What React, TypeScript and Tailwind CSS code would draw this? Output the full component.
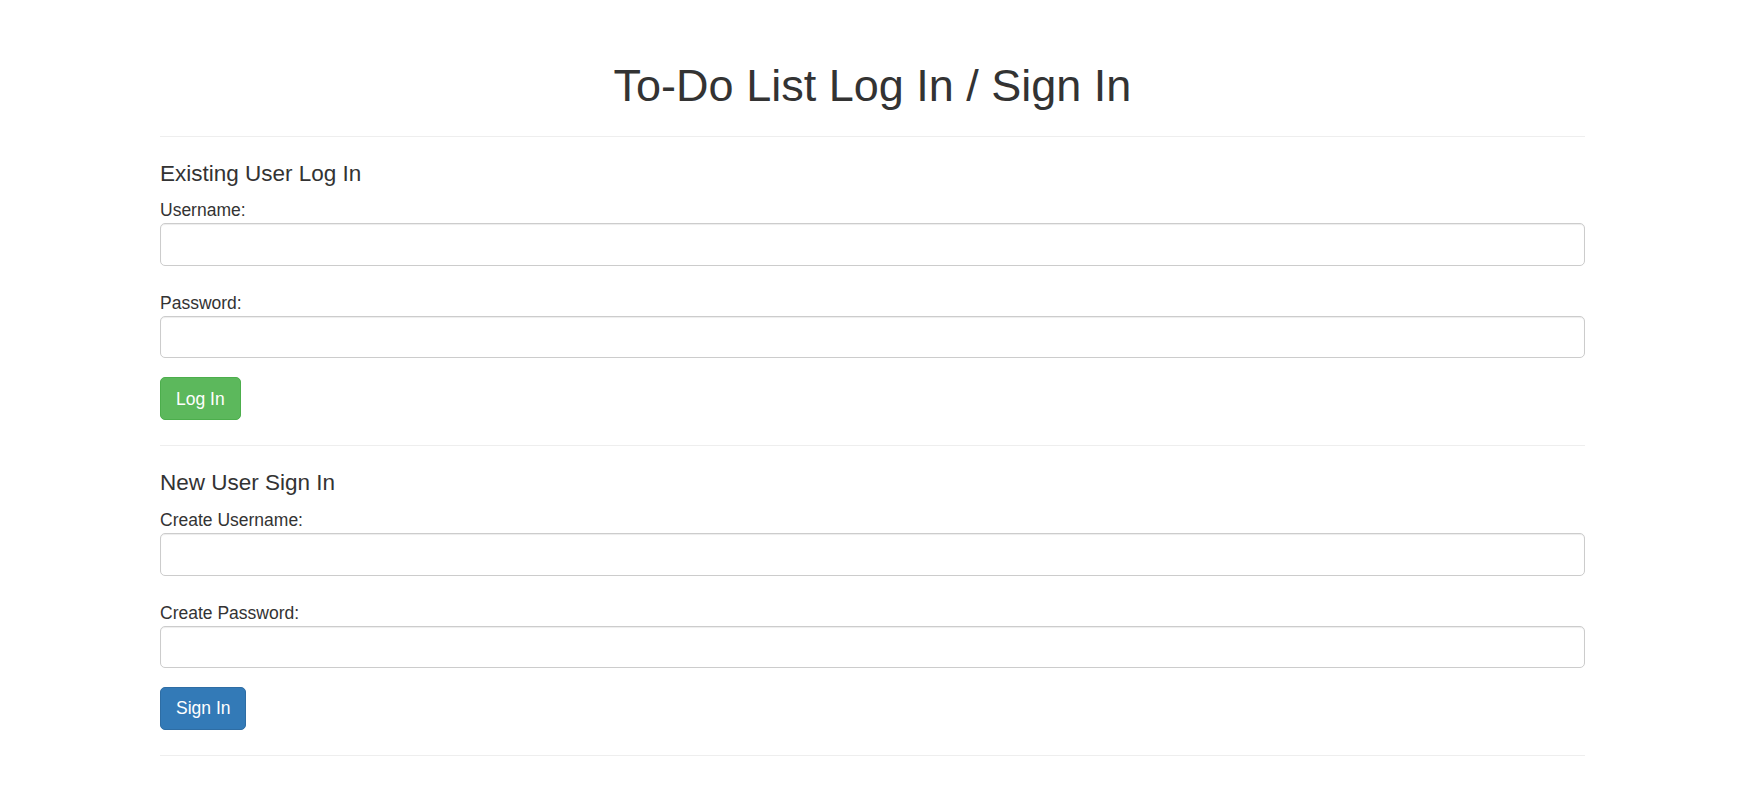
import React from 'react';

const Field: React.FC<{ label: string; type?: string; first?: boolean }> = ({
  label,
  type = 'text',
  first,
}) => (
  <div className={first ? '' : 'mt-[25px]'}>
    <label className="block text-[17.5px] leading-[25px] text-[#333]">{label}</label>
    <input
      type={type}
      className="block h-[42.5px] w-full rounded-[5px] border border-[#ccc] bg-white px-[15px] text-[17.5px] text-[#555] shadow-[inset_0_1px_1px_rgba(0,0,0,0.075)] outline-none"
    />
  </div>
);

const App: React.FC = () => {
  return (
    <div className="min-h-screen bg-white font-['Liberation_Sans',Arial,sans-serif] text-[#333]">
      <div className="ml-[160px] w-[1425px] pt-[61px]">
        <h1 className="text-center text-[45px] leading-[49.5px] font-normal">
          To-Do List Log In / Sign In
        </h1>
        <hr className="mt-[25px] border-0 border-t-[1.25px] border-[#eee]" />

        {/* Existing user */}
        <section>
          <h4 className="mt-[25px] mb-[12px] text-[22.5px] leading-[24.75px] font-normal">
            Existing User Log In
          </h4>
          <Field label="Username:" first />
          <Field label="Password:" type="password" />
          <button className="mt-[19px] h-[43px] rounded-[5px] border border-[#4cae4c] bg-[#5cb85c] px-[15px] text-[17.5px] text-white">
            Log In
          </button>
        </section>
        <hr className="mt-[25px] border-0 border-t-[1.25px] border-[#eee]" />

        {/* New user */}
        <section>
          <h4 className="mt-[25px] mb-[12px] text-[22.5px] leading-[24.75px] font-normal">
            New User Sign In
          </h4>
          <Field label="Create Username:" first />
          <Field label="Create Password:" type="password" />
          <button className="mt-[19px] h-[43px] rounded-[5px] border border-[#2e6da4] bg-[#337ab7] px-[15px] text-[17.5px] text-white">
            Sign In
          </button>
        </section>
        <hr className="mt-[25px] border-0 border-t-[1.25px] border-[#eee]" />
      </div>
    </div>
  );
};

export default App;
